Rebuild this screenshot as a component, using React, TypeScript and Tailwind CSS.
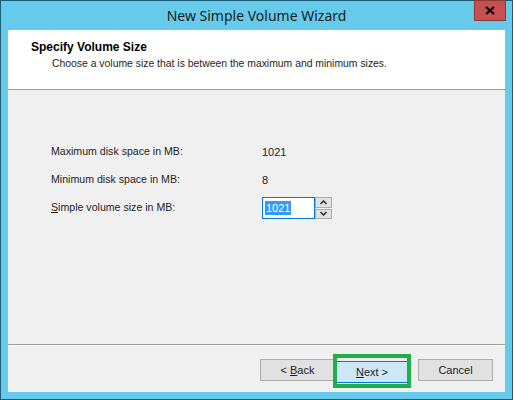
import React from 'react';

const ui = { fontFamily: '"Liberation Sans", Arial, sans-serif' };

function Chevron({ up }: { up?: boolean }) {
  return (
    <svg width="7" height="5" viewBox="0 0 7 5">
      <path d={up ? 'M0.5 4 L3.5 1 L6.5 4' : 'M0.5 1 L3.5 4 L6.5 1'} fill="none" stroke="#222" strokeWidth="1.4" />
    </svg>
  );
}

function Row({ label, children }: { label: React.ReactNode; children: React.ReactNode }) {
  return (
    <div className="flex h-[28px] items-center">
      <div className="w-[211px] shrink-0 text-[10.6px] text-[#1e1e1e]">{label}</div>
      <div className="flex items-center text-[11px] text-[#1e1e1e]">{children}</div>
    </div>
  );
}

export default function App() {
  return (
    <div className="h-[400px] w-[513px] overflow-hidden bg-[#1d5d76] p-px" style={ui}>
      <div className="flex h-full w-full flex-col bg-[#66cbea]">
        {/* title bar */}
        <div className="relative flex h-[29px] shrink-0 items-center justify-center">
          <span className="text-[14px] text-[#1b1b1b]" style={{ fontFamily: '"Noto Sans", "Open Sans", sans-serif' }}>
            New Simple Volume Wizard
          </span>
          <div className="absolute right-[6px] top-[-1px] flex h-[21px] w-[32px] items-center justify-center border border-[#8a3a3a] bg-[#c75050]">
            <svg width="10" height="9" viewBox="0 0 10 9">
              <path d="M1 1 L9 8 M9 1 L1 8" stroke="#000" strokeWidth="2.2" />
            </svg>
          </div>
        </div>

        {/* client */}
        <div className="mx-[7px] mb-[7px] flex flex-1 flex-col bg-[#f0f0f0]">
          <div className="h-[60px] shrink-0 border-b border-[#a0a0a0] bg-white pl-[23px] pt-[10px]">
            <div className="text-[12px] font-bold leading-[14px] text-black">Specify Volume Size</div>
            <div className="mt-[3px] pl-[21px] text-[10.4px] leading-[13px] text-[#1e1e1e]">
              Choose a volume size that is between the maximum and minimum sizes.
            </div>
          </div>

          <div className="flex-1 pl-[43px] pt-[48px]">
            <Row label="Maximum disk space in MB:">1021</Row>
            <Row label="Minimum disk space in MB:">8</Row>
            <Row
              label={
                <span>
                  <span className="underline">S</span>imple volume size in MB:
                </span>
              }
            >
              <div className="flex h-[22px] w-[53px] items-center border border-[#0078d7] bg-white pl-[2px]">
                <span className="bg-[#3399ff] px-px leading-[14px] text-white">1021</span>
              </div>
              <div className="flex h-[22px] w-[17px] flex-col gap-px">
                <div className="flex flex-1 items-center justify-center border border-[#adadad] bg-[#e1e1e1]">
                  <Chevron up />
                </div>
                <div className="flex flex-1 items-center justify-center border border-[#adadad] bg-[#e1e1e1]">
                  <Chevron />
                </div>
              </div>
            </Row>
          </div>

          <div className="h-[2px] shrink-0 border-t border-[#a0a0a0] bg-white" />

          <div className="flex h-[46px] shrink-0 items-start justify-end pr-[12px] pt-[13px]">
            <button className="h-[22px] w-[75px] border border-[#adadad] bg-[#e1e1e1] text-[11px] text-[#1e1e1e]">
              &lt; <span className="underline">B</span>ack
            </button>
            <div className="relative">
              <button className="h-[22px] w-[74px] border border-[#0078d7] bg-[#cce8f9] text-[11px] text-[#1e1e1e]">
                <span className="underline">N</span>ext &gt;
              </button>
              <div className="pointer-events-none absolute inset-x-[-2px] inset-y-[-5px] border-[4px] border-[#1fae47]" />
            </div>
            <button className="ml-[9px] h-[22px] w-[75px] border border-[#adadad] bg-[#e1e1e1] text-[11px] text-[#1e1e1e]">
              Cancel
            </button>
          </div>
        </div>
      </div>
    </div>
  );
}
